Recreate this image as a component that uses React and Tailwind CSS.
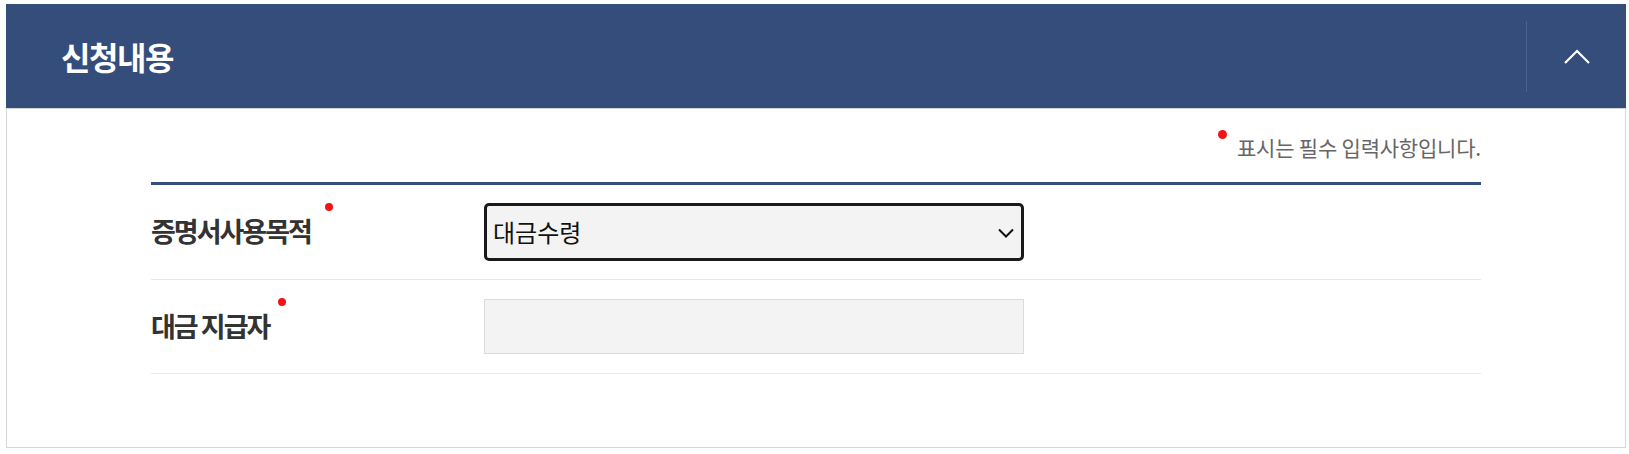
import React from "react";

const FormRow = ({ label, dotOffset, children }) => (
  <div className="flex items-center border-b border-[#e8e8e8]">
    <div className="w-[333px] shrink-0">
      <span className="relative inline-block text-[27px] font-bold text-[#333] leading-none tracking-[-2px]">
        {label}
        <span
          className={`absolute -top-[14px] w-[8px] h-[8px] rounded-full bg-[#f01414] ${dotOffset}`}
        ></span>
      </span>
    </div>
    {children}
  </div>
);

export default function App() {
  return (
    <div
      className="pt-[4px] pl-[6px] bg-white"
      style={{ fontFamily: '"Noto Sans CJK KR", "Noto Sans", sans-serif' }}
    >
      <section className="w-[1620px]">
        {/* Header */}
        <div className="h-[104px] bg-[#344d7a] flex items-center justify-between">
          <h2 className="pl-[55px] text-[32px] font-bold text-white tracking-[-1.4px]">
            신청내용
          </h2>
          <div className="h-[71px] w-[100px] border-l border-[#4b6290] flex items-center justify-center">
            <svg width="26" height="15" viewBox="0 0 26 15" fill="none">
              <polyline
                points="1,14 13,2 25,14"
                stroke="white"
                strokeWidth="2.2"
                strokeLinejoin="miter"
              />
            </svg>
          </div>
        </div>

        {/* Body */}
        <div className="border-x border-b border-t border-[#d6d6d6] px-[144px] pb-[73px]">
          <p className="h-[73px] flex items-center justify-end pt-[4px] text-[21px] text-[#666] tracking-[-0.2px]">
            <span className="w-[9px] h-[9px] rounded-full bg-[#f01414] mr-[10px] -mt-[26px]"></span>
            표시는 필수 입력사항입니다.
          </p>
          <div className="h-[3px] bg-[#344d7a]"></div>

          <FormRow label="증명서사용목적" dotOffset="-right-[22px]">
            <div className="h-[94px] flex items-center">
              <div className="relative w-[540px]">
                <select
                  defaultValue="대금수령"
                  className="appearance-none w-full h-[58px] rounded-[5px] border-[3px] border-[#1a1a1a] bg-[#f3f3f3] pl-[6px] text-[24px] text-[#111] outline-none"
                >
                  <option>대금수령</option>
                  <option>기타</option>
                </select>
                <svg
                  className="absolute right-[10px] top-[25px] pointer-events-none"
                  width="16"
                  height="10"
                  viewBox="0 0 16 10"
                  fill="none"
                >
                  <polyline points="1,1.5 8,8.5 15,1.5" stroke="#111" strokeWidth="2" />
                </svg>
              </div>
            </div>
          </FormRow>

          <FormRow label="대금 지급자" dotOffset="-right-[17px]">
            <div className="h-[93px] flex items-center">
              <input
                type="text"
                className="w-[540px] h-[55px] border border-[#dcdcdc] bg-[#f3f3f3] px-[10px] text-[18px] outline-none"
              />
            </div>
          </FormRow>
        </div>
      </section>
    </div>
  );
}
